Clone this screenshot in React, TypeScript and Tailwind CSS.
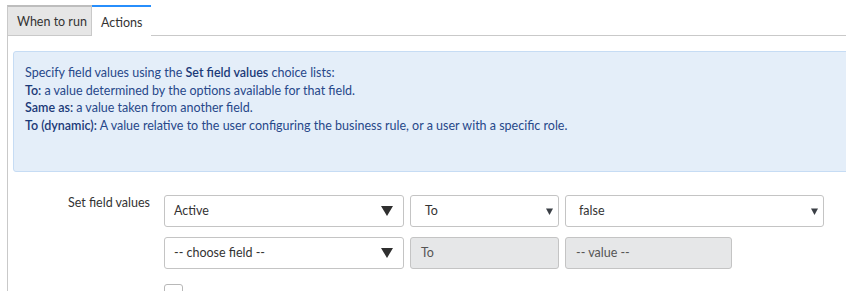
const font = { fontFamily: '"Lato", "Liberation Sans", sans-serif' };

const BigArrow = () => (
  <svg width="12" height="10" viewBox="0 0 12 10" className="shrink-0">
    <path d="M0 0 H12 L6 10 Z" fill="#2f2f2f" />
  </svg>
);

const SmallArrow = () => (
  <svg width="7" height="7" viewBox="0 0 7 7" className="shrink-0">
    <path d="M0 0.5 H7 L3.5 7 Z" fill="#3a3f45" />
  </svg>
);

export default function App() {
  return (
    <div
      className="relative h-[291px] w-[846px] overflow-hidden bg-white text-[12.5px] text-[#333]"
      style={font}
    >
      {/* tabs */}
      <div className="flex pl-[7px] pt-[5px]">
        <div className="flex h-[31px] w-[85px] items-center border border-t-2 border-[#c9c9c9] border-t-[#bdbdbd] bg-[#e6e6e6] pl-[9px] pt-[3px]">
          When to run
        </div>
        <div className="flex h-[31px] w-[59px] items-center border-t-2 border-[#278efc] bg-white pl-[9px] pt-[3px]">
          Actions
        </div>
        <div className="flex-1 border-b border-[#c9c9c9]" />
      </div>

      {/* panel */}
      <div className="ml-[7px] h-[260px] border-l border-[#c9c9c9] pl-[5px] pt-[15px]">
        <div className="h-[121px] w-[900px] rounded-[3px] border border-[#c6dcf4] bg-[#e4eef9] pl-[11px] pt-[12px] leading-[17.5px] text-[#27488a]">
          <div>
            Specify field values using the{" "}
            <b className="font-semibold text-[#1b3a78]">Set field values</b> choice lists:
          </div>
          <div>
            <b className="font-semibold text-[#1b3a78]">To:</b> a value determined by the options available for that field.
          </div>
          <div>
            <b className="font-semibold text-[#1b3a78]">Same as:</b> a value taken from another field.
          </div>
          <div>
            <b className="font-semibold text-[#1b3a78]">To (dynamic):</b> A value relative to the user configuring the business rule, or a user with a specific role.
          </div>
        </div>

        {/* form */}
        <div className="mt-[23px] flex">
          <div className="flex w-[137px] flex-col items-end justify-between pb-[2px] leading-[15px]">
            <span>Set field values</span>
            <span className="translate-y-[14px]">Add message</span>
          </div>
          <div className="ml-[14px] flex flex-col gap-[10px]">
            <div className="flex gap-[6px]">
              <div className="flex h-[32px] w-[240px] items-center justify-between rounded-[3px] border border-[#c4c4c4] bg-white pl-[9px] pr-[10px]">
                <span>Active</span>
                <BigArrow />
              </div>
              <div className="flex h-[32px] w-[149px] items-center justify-between rounded-[3px] border border-[#c4c4c4] bg-white pl-[14px] pr-[5px]">
                <span>To</span>
                <SmallArrow />
              </div>
              <div className="flex h-[32px] w-[259px] items-center justify-between rounded-[3px] border border-[#c4c4c4] bg-white pl-[13px] pr-[5px]">
                <span>false</span>
                <SmallArrow />
              </div>
            </div>
            <div className="flex gap-[6px]">
              <div className="flex h-[32px] w-[240px] items-center justify-between rounded-[3px] border border-[#c4c4c4] bg-white pl-[9px] pr-[10px]">
                <span>-- choose field --</span>
                <BigArrow />
              </div>
              <div className="flex h-[32px] w-[149px] items-center rounded-[3px] border border-[#c4c4c4] bg-[#e6e7e8] pl-[10px] text-[#555]">
                To
              </div>
              <div className="flex h-[32px] w-[167px] items-center rounded-[3px] border border-[#c4c4c4] bg-[#e6e7e8] pl-[10px] text-[#555]">
                -- value --
              </div>
            </div>
            <div className="mt-[5px] h-[20px] w-[19px] rounded-[3px] border border-[#b8b8b8] bg-white" />
          </div>
        </div>
      </div>
    </div>
  );
}
